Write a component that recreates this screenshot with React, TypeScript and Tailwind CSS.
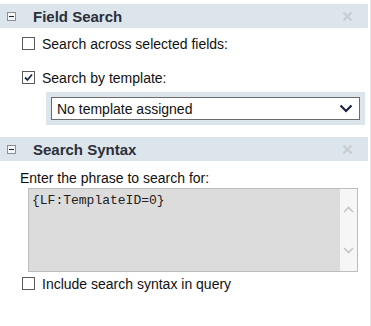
import React from 'react';

const font = { fontFamily: '"Liberation Sans", Arial, sans-serif' };

const Minus = () => (
  <div className="w-[9px] h-[9px] border border-[#8a9099] bg-[#f4f6f8] flex items-center justify-center">
    <div className="w-[5px] h-[1px] bg-[#1a2540]" />
  </div>
);

const Close = () => (
  <svg width="11" height="11" viewBox="0 0 11 11" className="text-[#c9cdd1]">
    <path d="M1.5 1.5 L9.5 9.5 M9.5 1.5 L1.5 9.5" stroke="currentColor" strokeWidth="2.2" />
  </svg>
);

const Checkbox = ({ checked = false }: { checked?: boolean }) => (
  <div className="w-[13px] h-[13px] border border-[#5a5a5a] bg-white flex items-center justify-center shrink-0">
    {checked && (
      <svg width="11" height="11" viewBox="0 0 11 11">
        <path d="M2 5.5 L4.5 8 L9 2.5" fill="none" stroke="#1c2a48" strokeWidth="1.8" />
      </svg>
    )}
  </div>
);

const Header = ({ title }: { title: string }) => (
  <div className="h-[24px] bg-[#dce5ec] mr-[2px] flex items-center pl-[7px] pr-[15px]">
    <Minus />
    <span className="ml-[17px] text-[15px] font-bold text-[#2b2f3a] leading-none">{title}</span>
    <div className="ml-auto">
      <Close />
    </div>
  </div>
);

export default function App() {
  return (
    <div className="w-[371px] h-[326px] bg-white border-r border-[#e4e4e4] pt-[4px] text-[14px] text-[#111]" style={font}>
      <Header title="Field Search" />
      <div className="flex items-center gap-[7px] pl-[22px] mt-[9px] h-[13px]">
        <Checkbox />
        <span className="leading-none">Search across selected fields:</span>
      </div>
      <div className="flex items-center gap-[7px] pl-[22px] mt-[21px] h-[13px]">
        <Checkbox checked />
        <span className="leading-none">Search by template:</span>
      </div>
      <div className="ml-[46px] mr-[5px] mt-[8px] bg-[#dce5ec] p-[5px]">
        <div className="h-[23px] border border-[#6b6b6b] bg-white flex items-center pl-[5px] pr-[6px]">
          <span className="leading-none">No template assigned</span>
          <svg className="ml-auto" width="14" height="9" viewBox="0 0 14 9">
            <path d="M1.5 1.5 L7 7 L12.5 1.5" fill="none" stroke="#1c2240" strokeWidth="2.2" />
          </svg>
        </div>
      </div>
      <div className="mt-[12px]">
        <Header title="Search Syntax" />
      </div>
      <div className="pl-[20px] mt-[10px] leading-none">Enter the phrase to search for:</div>
      <div className="ml-[28px] mr-[12px] mt-[3px] h-[84px] border border-[#bdbdbd] bg-[#dcdcdc] flex">
        <div
          className="flex-1 pl-[3px] pt-[5px] text-[13px] text-[#222] leading-none"
          style={{ fontFamily: '"Liberation Mono", "Courier New", monospace' }}
        >
          {'{LF:TemplateID=0}'}
        </div>
        <div className="w-[17px] bg-[#f6f6f6] flex flex-col items-center justify-between py-[17px]">
          <svg width="11" height="7" viewBox="0 0 11 7">
            <path d="M1 6 L5.5 1.5 L10 6" fill="none" stroke="#c6c6c6" strokeWidth="1.6" />
          </svg>
          <svg width="11" height="7" viewBox="0 0 11 7">
            <path d="M1 1 L5.5 5.5 L10 1" fill="none" stroke="#c6c6c6" strokeWidth="1.6" />
          </svg>
        </div>
      </div>
      <div className="flex items-center gap-[7px] pl-[22px] mt-[5px] h-[13px]">
        <Checkbox />
        <span className="leading-none">Include search syntax in query</span>
      </div>
    </div>
  );
}
